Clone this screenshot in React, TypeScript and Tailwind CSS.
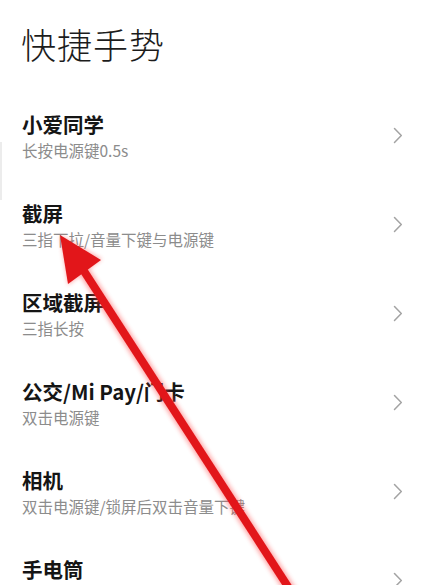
import React from "react";

const items = [
  { title: "小爱同学", sub: "长按电源键0.5s" },
  { title: "截屏", sub: "三指下拉/音量下键与电源键" },
  { title: "区域截屏", sub: "三指长按" },
  { title: "公交/Mi Pay/门卡", sub: "双击电源键" },
  { title: "相机", sub: "双击电源键/锁屏后双击音量下键" },
  { title: "手电筒", sub: "双击电源键" },
];

function Chevron() {
  return (
    <svg width="10" height="17" viewBox="0 0 10 17" fill="none" className="shrink-0">
      <path d="M1.5 1.5 L8.3 8.5 L1.5 15.5" stroke="#a3a3a3" strokeWidth="1.5" strokeLinecap="round" strokeLinejoin="round" />
    </svg>
  );
}

function Arrow() {
  return (
    <svg className="absolute inset-0 pointer-events-none" width="432" height="585" viewBox="0 0 432 585">
      <defs>
        <filter id="blur" x="-20%" y="-20%" width="140%" height="140%">
          <feGaussianBlur stdDeviation="2.2" />
        </filter>
      </defs>
      <g filter="url(#blur)" opacity="0.45">
        <line x1="82" y1="268" x2="294" y2="596" stroke="#ff4a4a" strokeWidth="12" />
        <polygon points="60,235 102,259 68,285" fill="#ff4a4a" />
      </g>
      <line x1="82" y1="268" x2="294" y2="596" stroke="#e2161a" strokeWidth="8" />
      <polygon points="60,235 101,260 68,284" fill="#e2161a" />
    </svg>
  );
}

export default function App() {
  return (
    <div
      className="relative w-[432px] h-[585px] overflow-hidden bg-white"
      style={{ fontFamily: '"Noto Sans CJK SC", "Noto Sans", sans-serif' }}
    >
      <div className="pt-[20px] pl-[21px] h-[91px]">
        <div className="text-[35px] leading-[48px] font-light text-[#1c1c1c] tracking-[1px]">快捷手势</div>
      </div>
      <div className="flex flex-col">
        {items.map((it) => (
          <div key={it.title} className="h-[89px] flex items-center pl-[22px] pr-[29px]">
            <div className="flex-1 flex flex-col">
              <div className="text-[20.5px] leading-[28px] font-bold text-[#151515]">{it.title}</div>
              <div className="text-[15.5px] leading-[24px] text-[#8c8c8c]">{it.sub}</div>
            </div>
            <Chevron />
          </div>
        ))}
      </div>
      <div className="absolute left-0 top-[142px] w-[2px] h-[58px] bg-[#ececec]" />
      <Arrow />
    </div>
  );
}
